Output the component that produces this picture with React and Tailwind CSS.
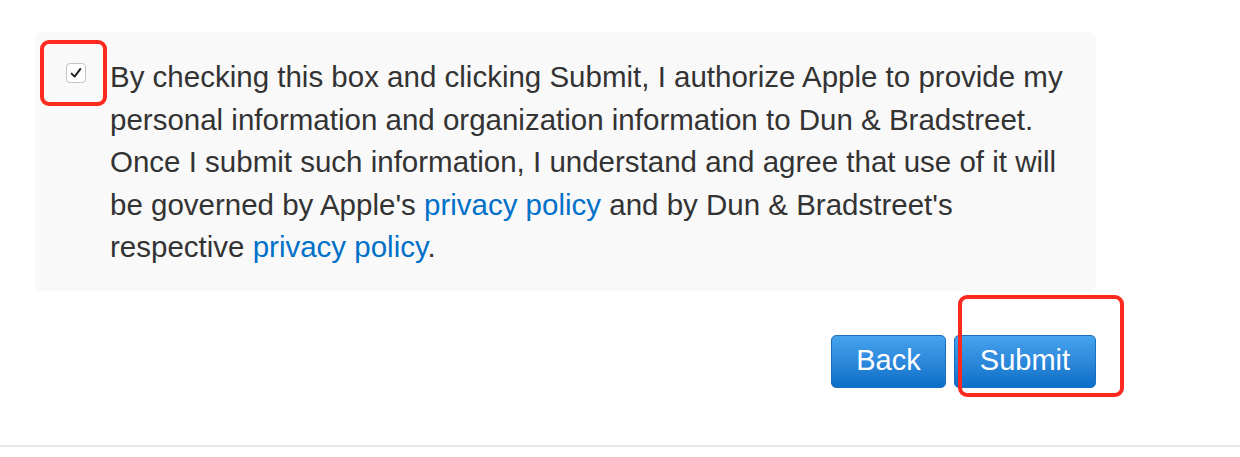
export default function App() {
  return (
    <div className="relative h-[457px] w-[1240px] bg-white font-['Liberation_Sans',Arial,sans-serif] text-[#333333]">
      <div className="pl-[35px] pt-[32px]">
        <div className="flex w-[1061px] rounded-[6px] bg-[#f9f9f9] pl-[31px] pr-[26px] pt-[31px] pb-[22px]">
          <div className="relative h-[20px] w-[20px] shrink-0">
            <div className="flex h-[20px] w-[20px] items-center justify-center rounded-[4px] border border-[#c4c4c4] bg-white">
              <svg width="14" height="14" viewBox="0 0 14 14" fill="none">
                <path d="M2.6 7.6 L5.6 10.6 L11.4 2.9" stroke="#1e1e1e" strokeWidth="1.9" strokeLinecap="round" strokeLinejoin="round" />
              </svg>
            </div>
            <div className="absolute left-[-26px] top-[-23px] h-[66px] w-[67px] rounded-[9px] border-4 border-[#ff2a1f]" />
          </div>
          <p className="ml-[24px] -mt-[7px] text-[29.5px] leading-[42.5px]">
            By checking this box and clicking Submit, I authorize Apple to provide my personal information and organization information to Dun &amp; Bradstreet. Once I submit such information, I understand and agree that use of it will be governed by Apple's{' '}
            <a href="#" className="text-[#0070c9]">privacy policy</a> and by Dun &amp; Bradstreet's respective{' '}
            <a href="#" className="text-[#0070c9]">privacy policy</a>.
          </p>
        </div>
        <div className="mt-[44px] flex w-[1061px] justify-end gap-[8px]">
          <button className="h-[53px] w-[115px] rounded-[5px] border border-[#1a6fc0] bg-gradient-to-b from-[#46a3ee] to-[#0a6fc8] text-[29px] text-white">
            Back
          </button>
          <div className="relative">
            <button className="h-[53px] w-[142px] rounded-[5px] border border-[#1a6fc0] bg-gradient-to-b from-[#46a3ee] to-[#0a6fc8] text-[29px] text-white">
              Submit
            </button>
            <div className="absolute left-[4px] top-[-40px] h-[102px] w-[166px] rounded-[9px] border-4 border-[#ff2a1f]" />
          </div>
        </div>
      </div>
      <div className="absolute bottom-[10px] left-0 h-[2px] w-full bg-[#e8e8e8]" />
    </div>
  );
}
